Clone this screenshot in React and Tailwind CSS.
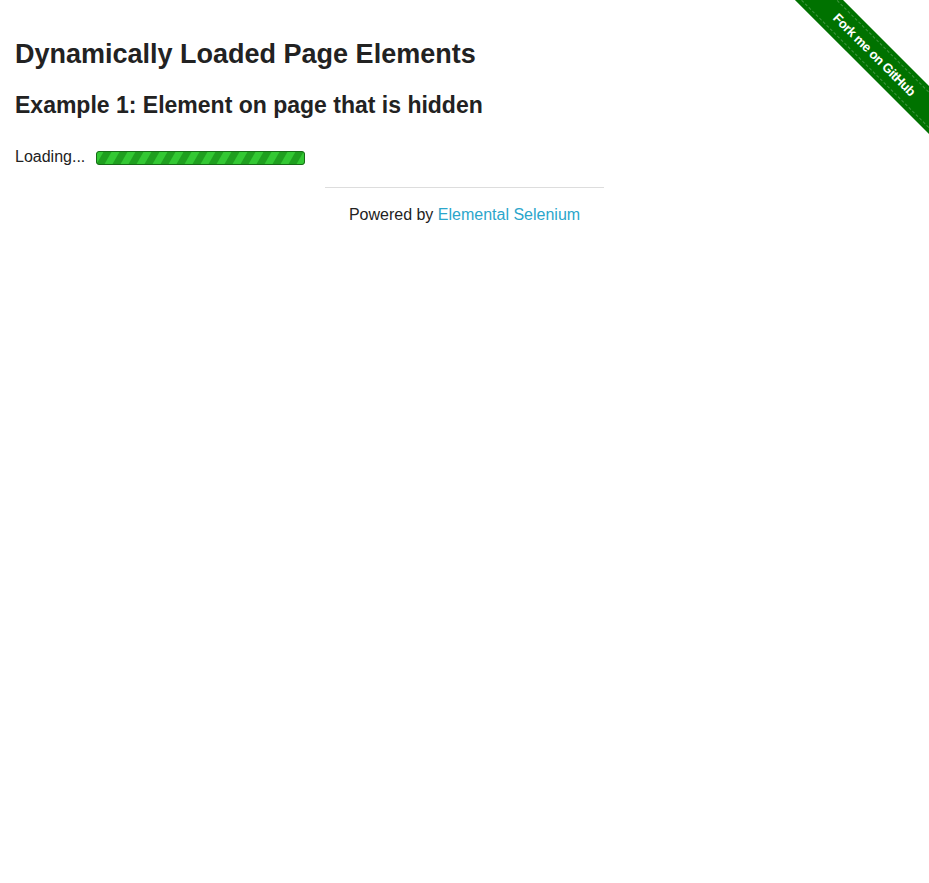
import React from "react";

const Stripes = () => {
  const stripes = [];
  for (let i = -16; i < 224; i += 16) stripes.push(i);
  return (
    <svg width="209" height="14" viewBox="0 0 209 14" className="block">
      <defs>
        <clipPath id="bar">
          <rect x="0.5" y="0.5" width="208" height="13" rx="2.5" />
        </clipPath>
      </defs>
      <rect x="0.5" y="0.5" width="208" height="13" rx="2.5" fill="#1f9f1f" />
      <g clipPath="url(#bar)">
        {stripes.map((x) => (
          <polygon key={x} points={`${x + 8},14 ${x + 16},0 ${x + 24},0 ${x + 16},14`} fill="#33c833" />
        ))}
      </g>
      <rect x="0.5" y="0.5" width="208" height="13" rx="2.5" fill="none" stroke="#176b17" />
    </svg>
  );
};

export default function App() {
  return (
    <div className="relative min-h-screen bg-white text-[#222] font-['Liberation_Sans',Arial,sans-serif]">
      {/* Fork ribbon */}
      <div className="absolute top-0 right-0 w-[149px] h-[149px] overflow-hidden">
        <div className="absolute left-[-6px] top-[38px] w-[200px] h-[34px] rotate-45 bg-[#007200] flex items-center justify-center">
          <div className="w-full h-[26px] border-y border-dashed border-white/25 flex items-center justify-center">
            <span className="text-white font-bold text-[13px] tracking-[-0.4px]">Fork me on GitHub</span>
          </div>
        </div>
      </div>

      <div className="px-[15px] pt-[37px]">
        <h3 className="text-[27px] font-bold leading-[34px]">Dynamically Loaded Page Elements</h3>
        <h4 className="mt-[20px] text-[23px] font-bold leading-[29px]">Example 1: Element on page that is hidden</h4>
        <div className="mt-[27px] text-[16px] leading-[20px] flex items-start">
          <span>Loading...</span>
          <span className="ml-[11px] mt-[4px] flex">
            <Stripes />
          </span>
        </div>
      </div>

      <div className="mt-[20px] flex flex-col items-center">
        <hr className="w-[30%] border-0 border-t border-[#ddd]" />
        <div className="mt-[17px] text-[16px] leading-[20px]">
          Powered by <a href="#" className="text-[#2ba6cb]">Elemental Selenium</a>
        </div>
      </div>
    </div>
  );
}
